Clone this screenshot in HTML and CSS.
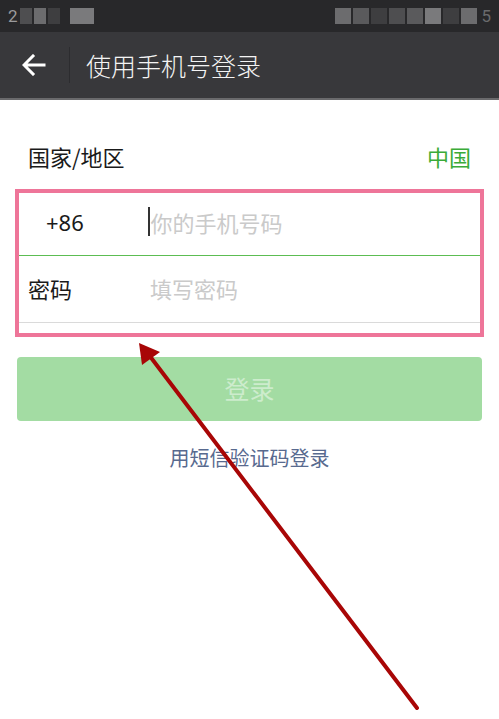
FILE: index.html
```html
<!DOCTYPE html>
<html lang="zh-CN">
<head>
<meta charset="utf-8">
<link rel="stylesheet" href="styles.css">
</head>
<body>
<div class="status">
  <div class="status-left">
    <span class="clock">2</span>
    <span class="mosaic m1"></span><span class="mosaic m2"></span><span class="mosaic m3"></span>
    <span class="mosaic m4 gap"></span>
  </div>
  <div class="status-right">
    <span class="mosaic m2"></span><span class="mosaic m5"></span><span class="mosaic m3"></span><span class="mosaic m1"></span><span class="mosaic m5"></span><span class="mosaic m4"></span><span class="mosaic m3"></span><span class="mosaic m2"></span><span class="clock dim">5</span>
  </div>
</div>
<header class="nav">
  <span class="back">
    <svg width="24" height="22" viewBox="0 0 24 22"><path d="M22 11H3M11 2L2 11l9 9" fill="none" stroke="#fff" stroke-width="3" stroke-linecap="square"/></svg>
  </span>
  <span class="sep"></span>
  <span class="title">使用手机号登录</span>
</header>
<main class="main">
  <div class="country">
    <span>国家/地区</span>
    <span class="green">中国</span>
  </div>
  <div class="frame">
    <div class="row row-phone">
      <span class="label code">+86</span>
      <span class="cursor"></span><span class="ph">你的手机号码</span>
    </div>
    <div class="row row-pass">
      <span class="label">密码</span>
      <span class="ph">填写密码</span>
    </div>
    <div class="tail"></div>
  </div>
  <div class="btn">登录</div>
  <div class="link">用短信验证码登录</div>
</main>
<svg class="arrow" width="499" height="719" viewBox="0 0 499 719">
  <line x1="417" y1="708" x2="149" y2="355" stroke="#a80606" stroke-width="4" stroke-linecap="round"/>
  <polygon points="139,343 142,365 160,352" fill="#a80606"/>
</svg>
</body>
</html>
```
FILE: styles.css
```css
html, body {
  margin: 0;
  padding: 0;
  background: #fff;
}
body {
  width: 499px;
  height: 719px;
  overflow: hidden;
  position: relative;
  font-family: "Noto Sans CJK SC", "Noto Sans", sans-serif;
}
.status {
  height: 32px;
  background: #28282a;
  display: flex;
  justify-content: space-between;
  align-items: center;
  padding: 0 6px 0 8px;
}
.status-left, .status-right {
  display: flex;
  align-items: center;
}
.clock {
  color: #9a9a9c;
  font-family: "Roboto", sans-serif;
  font-size: 17px;
  line-height: 20px;
  margin-right: 2px;
}
.clock.dim { color: #6a6a6c; margin-left: 2px; }
.mosaic {
  display: inline-block;
  width: 12px;
  height: 16px;
  margin-right: 2px;
}
.mosaic.gap { margin-left: 8px; width: 24px; }
.m1 { background: #4e4e50; }
.m2 { background: #6c6c6e; }
.m3 { background: #3e3e40; }
.m4 { background: #7a7a7c; }
.m5 { background: #5a5a5c; }
.status-right .mosaic { width: 16px; }

.nav {
  height: 66px;
  background: #38383b;
  border-bottom: 2px solid #6a6a6c;
  display: flex;
  align-items: center;
}
.back {
  width: 67px;
  display: flex;
  justify-content: center;
  padding-right: 2px;
}
.back svg { display: block; }
.sep {
  width: 1px;
  height: 36px;
  background: #2c2c2f;
}
.title {
  margin-left: 16px;
  color: #f4f4f4;
  font-size: 25px;
  font-weight: 300;
  line-height: 32px;
}

.country {
  display: flex;
  justify-content: space-between;
  align-items: center;
  height: 67px;
  margin-top: 22px;
  padding: 0 28px;
  font-size: 22px;
  color: #1a1a1a;
}
.green { color: #3aab38; }

.frame {
  margin: 0 15px 0 15px;
  border: 4px solid #ee7599;
}
.row {
  display: flex;
  align-items: center;
  padding-left: 9px;
  font-size: 22px;
  box-sizing: border-box;
}
.row-phone {
  height: 63px;
  padding-bottom: 5px;
  border-bottom: 1px solid #5cbd52;
}
.row-pass {
  height: 67px;
  padding-bottom: 3px;
  border-bottom: 1px solid #dadada;
}
.tail { height: 10px; }
.label {
  width: 122px;
  color: #1a1a1a;
  font-family: "Noto Sans CJK SC", sans-serif;
}
.label.code {
  padding-left: 18px;
  width: 104px;
  font-family: "Noto Sans", sans-serif;
}
.cursor {
  width: 1.5px;
  height: 29px;
  background: #333;
  margin-left: -2px;
  margin-right: 1px;
}
.ph { color: #cacaca; }

.btn {
  margin: 20px 17px 0 17px;
  height: 64px;
  padding-bottom: 3px;
  box-sizing: border-box;
  border-radius: 4px;
  background: #a3dca3;
  color: #cdeccd;
  font-size: 25px;
  display: flex;
  align-items: center;
  justify-content: center;
}
.link {
  margin-top: 25px;
  text-align: center;
  font-size: 20px;
  line-height: 24px;
  color: #586a8f;
}
.arrow {
  position: absolute;
  left: 0;
  top: 0;
  pointer-events: none;
}
```
